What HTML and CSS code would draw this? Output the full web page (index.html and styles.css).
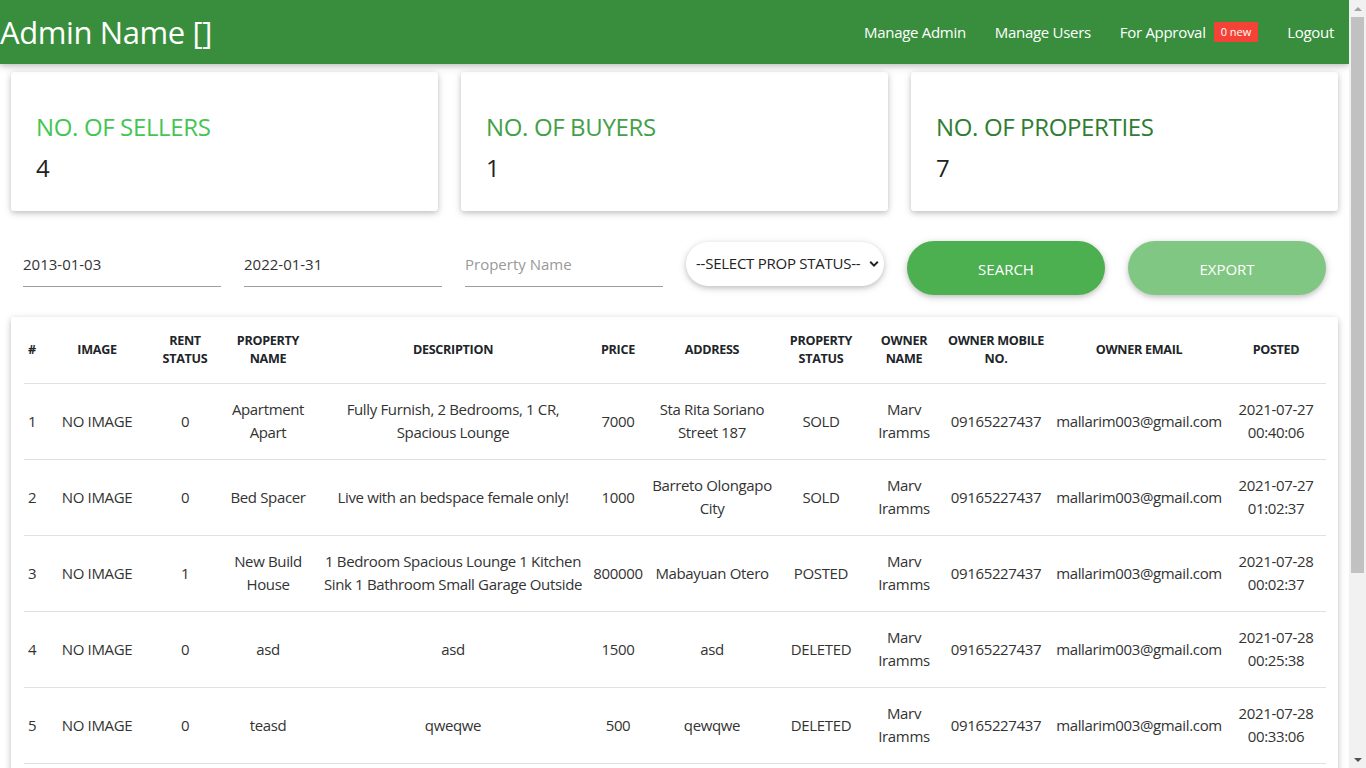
FILE: index.html
```html
<!DOCTYPE html>
<html lang="en">
<head>
<meta charset="utf-8">
<title>Admin</title>
<link rel="stylesheet" href="styles.css">
</head>
<body>
<div class="page">
<header class="topbar">
  <div class="brand">Admin Name []</div>
  <nav class="nav">
    <a class="nav-link" href="#">Manage Admin</a>
    <a class="nav-link" href="#">Manage Users</a>
    <a class="nav-link" href="#">For Approval <span class="badge">0 new</span></a>
    <a class="nav-link" href="#">Logout</a>
  </nav>
</header>

<section class="stats">
  <div class="card stat">
    <div class="stat-title t1">NO. OF SELLERS</div>
    <div class="stat-num">4</div>
  </div>
  <div class="card stat">
    <div class="stat-title t2">NO. OF BUYERS</div>
    <div class="stat-num">1</div>
  </div>
  <div class="card stat">
    <div class="stat-title t3">NO. OF PROPERTIES</div>
    <div class="stat-num">7</div>
  </div>
</section>

<section class="filters">
  <div class="field"><input class="inp" type="text" value="2013-01-03"></div>
  <div class="field"><input class="inp" type="text" value="2022-01-31"></div>
  <div class="field"><input class="inp" type="text" placeholder="Property Name"></div>
  <div class="select-wrap">
    <select class="sel"><option>--SELECT PROP STATUS--</option></select>
    <svg class="chev" width="10" height="8" viewBox="0 0 10 8"><path d="M1.2 1.8 L5 5.6 L8.8 1.8" fill="none" stroke="#222" stroke-width="2"/></svg>
  </div>
  <button class="btn btn-search">SEARCH</button>
  <button class="btn btn-export">EXPORT</button>
</section>

<section class="card table-card">
  <table class="tbl">
    <colgroup>
      <col class="c-no"><col class="c-img"><col class="c-rent"><col class="c-name"><col class="c-desc"><col class="c-price"><col class="c-addr"><col class="c-stat"><col class="c-owner"><col class="c-mob"><col class="c-mail"><col class="c-post">
    </colgroup>
    <thead>
      <tr>
        <th class="first">#</th><th>IMAGE</th><th>RENT STATUS</th><th>PROPERTY NAME</th><th>DESCRIPTION</th><th>PRICE</th><th>ADDRESS</th><th>PROPERTY STATUS</th><th>OWNER NAME</th><th>OWNER MOBILE NO.</th><th>OWNER EMAIL</th><th>POSTED</th>
      </tr>
    </thead>
    <tbody>
      <tr>
        <td class="first">1</td><td>NO IMAGE</td><td>0</td><td>Apartment Apart</td><td>Fully Furnish, 2 Bedrooms, 1 CR, Spacious Lounge</td><td>7000</td><td>Sta Rita Soriano Street 187</td><td>SOLD</td><td>Marv Iramms</td><td>09165227437</td><td>mallarim003@gmail.com</td><td>2021-07-27 00:40:06</td>
      </tr>
      <tr>
        <td class="first">2</td><td>NO IMAGE</td><td>0</td><td>Bed Spacer</td><td>Live with an bedspace female only!</td><td>1000</td><td>Barreto Olongapo City</td><td>SOLD</td><td>Marv Iramms</td><td>09165227437</td><td>mallarim003@gmail.com</td><td>2021-07-27 01:02:37</td>
      </tr>
      <tr>
        <td class="first">3</td><td>NO IMAGE</td><td>1</td><td>New Build House</td><td>1 Bedroom Spacious Lounge 1 Kitchen Sink 1 Bathroom Small Garage Outside</td><td>800000</td><td>Mabayuan Otero</td><td>POSTED</td><td>Marv Iramms</td><td>09165227437</td><td>mallarim003@gmail.com</td><td>2021-07-28 00:02:37</td>
      </tr>
      <tr>
        <td class="first">4</td><td>NO IMAGE</td><td>0</td><td>asd</td><td>asd</td><td>1500</td><td>asd</td><td>DELETED</td><td>Marv Iramms</td><td>09165227437</td><td>mallarim003@gmail.com</td><td>2021-07-28 00:25:38</td>
      </tr>
      <tr>
        <td class="first">5</td><td>NO IMAGE</td><td>0</td><td>teasd</td><td>qweqwe</td><td>500</td><td>qewqwe</td><td>DELETED</td><td>Marv Iramms</td><td>09165227437</td><td>mallarim003@gmail.com</td><td>2021-07-28 00:33:06</td>
      </tr>
      <tr>
        <td class="first">6</td><td>NO IMAGE</td><td>0</td><td>Studio Unit</td><td>Near market and school</td><td>3500</td><td>Gordon Heights</td><td>POSTED</td><td>Marv Iramms</td><td>09165227437</td><td>mallarim003@gmail.com</td><td>2021-07-29 10:12:44</td>
      </tr>
      <tr>
        <td class="first">7</td><td>NO IMAGE</td><td>1</td><td>Town House</td><td>2 Bedrooms, 1 CR</td><td>9000</td><td>East Tapinac</td><td>POSTED</td><td>Marv Iramms</td><td>09165227437</td><td>mallarim003@gmail.com</td><td>2021-07-30 08:05:19</td>
      </tr>
    </tbody>
  </table>
</section>
</div>

<div class="scrollbar" aria-hidden="true">
  <div class="sb-btn"><span class="tri-up"></span></div>
  <div class="sb-track"><div class="sb-thumb"></div></div>
  <div class="sb-btn"><span class="tri-down"></span></div>
</div>
</body>
</html>
```

FILE: styles.css
```css
* { box-sizing: border-box; }
html, body { margin: 0; padding: 0; }
body {
  font-family: "Open Sans", "Noto Sans", "Liberation Sans", sans-serif;
  color: #212529;
  background: #fff;
  font-size: 16px;
}
.page { width: 1349px; padding-bottom: 20px; }

.topbar {
  height: 64px;
  background: #388e3c;
  display: flex;
  align-items: center;
  justify-content: space-between;
  box-shadow: 0 2px 5px rgba(0,0,0,.16), 0 2px 10px rgba(0,0,0,.12);
  position: relative;
  z-index: 2;
}
.brand {
  color: #fff;
  font-size: 31px;
  letter-spacing: -0.4px;
  line-height: 1;
  padding-top: 1px;
}
.nav { display: flex; align-items: center; padding-right: 1px; }
.nav-link {
  color: #fff;
  text-decoration: none;
  font-size: 15px;
  letter-spacing: -0.3px;
  padding: 0 14px 0 15px;
  display: flex;
  align-items: center;
}
.badge {
  background: #f44336;
  color: #fff;
  font-size: 11px;
  line-height: 20px;
  padding: 0 7px;
  margin-left: 8px;
  border-radius: 1px;
  letter-spacing: 0;
}

.card {
  background: #fff;
  border-radius: 3px;
  box-shadow: 0 2px 5px rgba(0,0,0,.16), 0 2px 10px rgba(0,0,0,.12);
}

.stats {
  display: grid;
  grid-template-columns: repeat(3, 427px);
  column-gap: 23px;
  padding: 8px 11px 0 11px;
}
.stat { height: 139px; padding: 40px 25px 24px 25px; }
.stat-title { font-size: 24px; line-height: 29px; letter-spacing: -0.35px; margin-bottom: 9px; }
.t1 { color: #44c553; }
.t2 { color: #43a047; }
.t3 { color: #2e7d32; }
.stat-num { font-size: 24px; line-height: 36px; color: #222; }

.filters {
  display: grid;
  grid-template-columns: repeat(6, 198px);
  column-gap: 23px;
  padding: 30px 23px 0 23px;
  align-items: start;
}
.field { height: 46px; }
.inp {
  width: 100%;
  height: 46px;
  border: none;
  border-bottom: 1px solid #9e9e9e;
  font-family: inherit;
  font-size: 15px;
  color: #333;
  padding: 0;
  outline: none;
  background: transparent;
}
.inp::placeholder { color: #999; }

.select-wrap { position: relative; margin-top: 1px; height: 44px; }
.sel {
  appearance: none;
  -webkit-appearance: none;
  width: 100%;
  height: 44px;
  border: none;
  border-radius: 22px;
  background: #fff;
  box-shadow: 0 2px 5px rgba(0,0,0,.16), 0 2px 10px rgba(0,0,0,.12);
  font-family: inherit;
  font-size: 15px;
  letter-spacing: -0.25px;
  color: #222;
  padding: 0 0 2px 10px;
}
.chev { position: absolute; right: 5px; top: 18px; }

.btn {
  height: 54px;
  border: none;
  border-radius: 27px;
  color: #fff;
  font-family: inherit;
  font-size: 15px;
  letter-spacing: 0;
  box-shadow: 0 2px 5px rgba(0,0,0,.16), 0 2px 10px rgba(0,0,0,.12);
  padding-top: 2px;
}
.btn-search { background: #4caf50; }
.btn-export { background: #81c784; }

.table-card {
  margin: 22px 11px 0 11px;
  padding: 5px 12px 0 13px;
}
.tbl {
  width: 1302px;
  table-layout: fixed;
  border-collapse: collapse;
}
.c-no { width: 16px; }
.c-img { width: 114px; }
.c-rent { width: 62px; }
.c-name { width: 104px; }
.c-desc { width: 266px; }
.c-price { width: 64px; }
.c-addr { width: 124px; }
.c-stat { width: 94px; }
.c-owner { width: 72px; }
.c-mob { width: 112px; }
.c-mail { width: 174px; }
.c-post { width: 100px; }

.tbl th {
  font-size: 12.6px;
  font-weight: 700;
  line-height: 18px;
  padding: 10px 3px 15px 3px;
  text-align: center;
  color: #212529;
  letter-spacing: -0.3px;
  border-bottom: 1px solid #dee2e6;
}
.tbl td {
  font-size: 15px;
  line-height: 23px;
  padding: 14px 2px 15px 2px;
  text-align: center;
  color: #333;
  letter-spacing: -0.35px;
  border-bottom: 1px solid #dee2e6;
}
.tbl .first { text-align: left; padding-left: 4px; padding-right: 0; }

.scrollbar {
  position: fixed;
  top: 0;
  right: 0;
  width: 17px;
  height: 100vh;
  background: #f1f1f1;
  display: flex;
  flex-direction: column;
  z-index: 10;
}
.sb-btn {
  height: 17px;
  display: flex;
  align-items: center;
  justify-content: center;
}
.tri-up {
  width: 0; height: 0;
  border-left: 4px solid transparent;
  border-right: 4px solid transparent;
  border-bottom: 4px solid #a3a3a3;
}
.tri-down {
  width: 0; height: 0;
  border-left: 4px solid transparent;
  border-right: 4px solid transparent;
  border-top: 4px solid #505050;
}
.sb-track { flex: 1; padding: 0 2px; }
.sb-thumb { height: 556px; background: #c1c1c1; }
```
